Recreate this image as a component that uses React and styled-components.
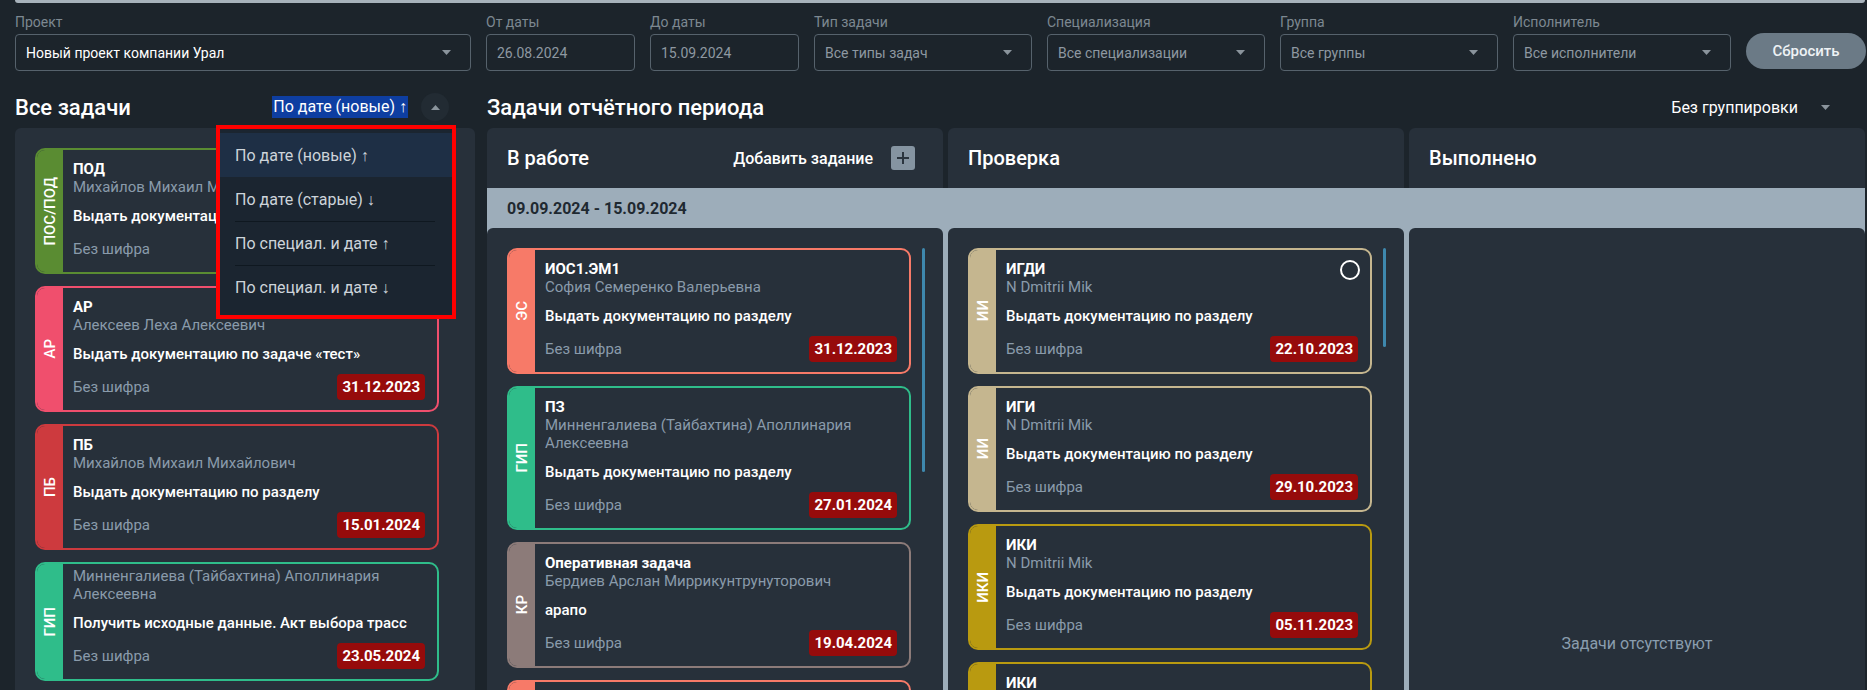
import React from "react";
import styled, { createGlobalStyle } from "styled-components";

const GlobalStyle = createGlobalStyle`
  html, body {
    margin: 0;
    padding: 0;
    background: #1c242b;
    overflow: hidden;
  }
  body {
    font-family: Roboto, "Noto Sans", Arial, sans-serif;
    color: #fff;
  }
  * {
    box-sizing: border-box;
  }
`;

const filters = [
  { label: "Проект", value: "Новый проект компании Урал", w: 456, arrow: true },
  { label: "От даты", value: "26.08.2024", w: 149, muted: true },
  { label: "До даты", value: "15.09.2024", w: 149, muted: true },
  { label: "Тип задачи", value: "Все типы задач", w: 218, muted: true, arrow: true },
  { label: "Специализация", value: "Все специализации", w: 218, muted: true, arrow: true },
  { label: "Группа", value: "Все группы", w: 218, muted: true, arrow: true },
  { label: "Исполнитель", value: "Все исполнители", w: 218, muted: true, arrow: true },
];

const sortOptions = [
  "По дате (новые) ↑",
  "По дате (старые) ↓",
  "По специал. и дате ↑",
  "По специал. и дате ↓",
];

const DOC = "Выдать документацию по разделу";
const GIP_NAME = "Минненгалиева (Тайбахтина) Аполлинария Алексеевна";

const allTasks = [
  { spec: "ПОС/ПОД", color: "#5a8c32", title: "ПОД", name: "Михайлов Михаил Михайлович", task: DOC, date: "10.12.2023" },
  { spec: "АР", color: "#f04f6d", title: "АР", name: "Алексеев Леха Алексеевич", task: "Выдать документацию по задаче «тест»", date: "31.12.2023" },
  { spec: "ПБ", color: "#cd3a3e", title: "ПБ", name: "Михайлов Михаил Михайлович", task: DOC, date: "15.01.2024" },
  { spec: "ГИП", color: "#2fbd8a", title: "", name: GIP_NAME, task: "Получить исходные данные. Акт выбора трасс", date: "23.05.2024" },
];

const columns = [
  {
    title: "В работе",
    add: true,
    thumb: 224,
    tasks: [
      { spec: "ЭС", color: "#f77a68", title: "ИОС1.ЭМ1", name: "София Семеренко Валерьевна", task: DOC, date: "31.12.2023" },
      { spec: "ГИП", color: "#2fbd8a", title: "ПЗ", name: GIP_NAME, task: DOC, date: "27.01.2024" },
      { spec: "КР", color: "#8c7b79", title: "Оперативная задача", name: "Бердиев Арслан Миррикунтрунуторович", task: "арапо", date: "19.04.2024" },
      { spec: "ЭС", color: "#f77a68", title: "ИОС1.ЭМ2", name: "София Семеренко Валерьевна", task: DOC, date: "20.05.2024" },
    ],
  },
  {
    title: "Проверка",
    thumb: 99,
    tasks: [
      { spec: "ИИ", color: "#c5b68f", title: "ИГДИ", name: "N Dmitrii Mik", task: DOC, date: "22.10.2023", marker: true },
      { spec: "ИИ", color: "#c5b68f", title: "ИГИ", name: "N Dmitrii Mik", task: DOC, date: "29.10.2023" },
      { spec: "ИКИ", color: "#b99a10", title: "ИКИ", name: "N Dmitrii Mik", task: DOC, date: "05.11.2023" },
      { spec: "ИКИ", color: "#b99a10", title: "ИКИ", name: "N Dmitrii Mik", task: DOC, date: "12.11.2023" },
    ],
  },
  { title: "Выполнено", tasks: [] },
];

const Caret = ({ up, color = "#8a949c" }) => (
  <svg width="9" height="5" viewBox="0 0 9 5">
    <path d={up ? "M0 5 L4.5 0 L9 5 Z" : "M0 0 L9 0 L4.5 5 Z"} fill={color} />
  </svg>
);

const TaskCard = ({ t }) => (
  <Card $color={t.color}>
    <Stripe $color={t.color}>
      <span>{t.spec}</span>
    </Stripe>
    <CardBody $noTitle={!t.title}>
      {t.title && <CardTitle>{t.title}</CardTitle>}
      <CardName>{t.name}</CardName>
      <CardTask>{t.task}</CardTask>
      <CardFooter>
        <Cipher>Без шифра</Cipher>
        <DateBadge>{t.date}</DateBadge>
      </CardFooter>
    </CardBody>
    {t.marker && <Marker />}
  </Card>
);

const App = () => {
  return (
    <Page>
      <GlobalStyle />
      <TopStrip />
      <Filters>
        {filters.map((f) => (
          <Field key={f.label} $w={f.w}>
            <FieldLabel>{f.label}</FieldLabel>
            <SelectBox $muted={f.muted}>
              <span>{f.value}</span>
              {f.arrow && <Caret />}
            </SelectBox>
          </Field>
        ))}
        <ResetButton>Сбросить</ResetButton>
      </Filters>

      <Workspace>
        <LeftSection>
          <Heading>
            <HeadingTitle>Все задачи</HeadingTitle>
            <HeadingTools>
              <SortText>По дате (новые) ↑</SortText>
              <RoundCaret>
                <Caret up />
              </RoundCaret>
            </HeadingTools>
          </Heading>
          <SortMenu>
            {sortOptions.map((o, i) => (
              <SortItem key={o} $active={i === 0} $divider={i > 1}>
                {o}
              </SortItem>
            ))}
          </SortMenu>
          <LeftPanel>
            {allTasks.map((t) => (
              <TaskCard key={t.spec + t.date} t={t} />
            ))}
          </LeftPanel>
        </LeftSection>

        <RightSection>
          <Heading>
            <HeadingTitle>Задачи отчётного периода</HeadingTitle>
            <HeadingTools>
              <GroupingText>Без группировки</GroupingText>
              <RoundCaret $plain>
                <Caret />
              </RoundCaret>
            </HeadingTools>
          </Heading>
          <Board>
            <ColumnHeaders>
              {columns.map((c) => (
                <ColumnHeader key={c.title}>
                  <ColumnTitle>{c.title}</ColumnTitle>
                  {c.add && (
                    <AddTask>
                      Добавить задание
                      <AddButton>
                        <svg width="14" height="14" viewBox="0 0 14 14">
                          <path d="M7 1 V13 M1 7 H13" stroke="#2a343e" strokeWidth="2" />
                        </svg>
                      </AddButton>
                    </AddTask>
                  )}
                </ColumnHeader>
              ))}
            </ColumnHeaders>
            <Period>
              <PeriodLabel>09.09.2024 - 15.09.2024</PeriodLabel>
              <PeriodColumns>
                {columns.map((c) =>
                  c.tasks.length ? (
                    <ColumnBody key={c.title}>
                      <CardList>
                        {c.tasks.map((t) => (
                          <TaskCard key={t.title + t.date} t={t} />
                        ))}
                      </CardList>
                      <ScrollThumb style={{ height: c.thumb }} />
                    </ColumnBody>
                  ) : (
                    <ColumnBody key={c.title} $empty>
                      <EmptyNote>Задачи отсутствуют</EmptyNote>
                    </ColumnBody>
                  )
                )}
              </PeriodColumns>
            </Period>
          </Board>
        </RightSection>
      </Workspace>
    </Page>
  );
};

export default App;

const Page = styled.div`
  padding: 0 2px 0 15px;
  min-height: 100vh;
`;

const TopStrip = styled.div`
  height: 3px;
  background: #a7b2bb;
  border-radius: 0 0 6px 6px;
`;

const Filters = styled.div`
  display: flex;
  align-items: flex-end;
  gap: 15px;
  margin-top: 11px;
`;

const Field = styled.div`
  flex: none;
  width: ${(p) => p.$w}px;
  display: flex;
  flex-direction: column;
  gap: 4px;
`;

const FieldLabel = styled.label`
  font-size: 14px;
  line-height: 16px;
  color: #7d8891;
`;

const SelectBox = styled.div`
  height: 37px;
  border: 1px solid #56626c;
  border-radius: 4px;
  display: flex;
  align-items: center;
  justify-content: space-between;
  padding: 0 19px 0 10px;
  font-size: 14px;
  color: ${(p) => (p.$muted ? "#8e98a1" : "#ffffff")};
  white-space: nowrap;
`;

const ResetButton = styled.button`
  flex: none;
  width: 120px;
  height: 36px;
  margin-bottom: 2px;
  border: none;
  border-radius: 18px;
  background: #6b7a86;
  color: #eef2f5;
  font-family: inherit;
  font-size: 15px;
  font-weight: 500;
`;

const Workspace = styled.div`
  display: flex;
  gap: 12px;
  margin-top: 21px;
`;

const LeftSection = styled.section`
  position: relative;
  flex: none;
  width: 460px;
`;

const RightSection = styled.section`
  flex: none;
  width: 1378px;
`;

const Heading = styled.div`
  height: 30px;
  margin-bottom: 6px;
  display: flex;
  align-items: center;
  justify-content: space-between;
`;

const HeadingTitle = styled.h2`
  margin: 0;
  font-size: 22px;
  font-weight: 500;
  color: #fff;
`;

const HeadingTools = styled.div`
  display: flex;
  align-items: center;
  gap: 13px;
  padding-right: 26px;
`;

const SortText = styled.span`
  background: #0e3ea1;
  color: #fff;
  font-size: 16px;
  line-height: 22px;
  padding: 0 1px;
`;

const GroupingText = styled.span`
  color: #fff;
  font-size: 16px;
`;

const RoundCaret = styled.span`
  width: 28px;
  height: 28px;
  border-radius: 50%;
  background: ${(p) => (p.$plain ? "transparent" : "#222b33")};
  display: flex;
  align-items: center;
  justify-content: center;
`;

const SortMenu = styled.ul`
  position: absolute;
  z-index: 5;
  left: 201px;
  top: 33px;
  width: 240px;
  margin: 0;
  padding: 4px 0 6px;
  list-style: none;
  background: #1b2530;
  border: 4px solid #ff0000;
`;

const SortItem = styled.li`
  height: 44px;
  display: flex;
  align-items: center;
  font-size: 16px;
  color: #cdd4da;
  background: ${(p) => (p.$active ? "#1e2f45" : "transparent")};
  border-top: ${(p) => (p.$divider ? "1px solid #0f1820" : "none")};
  margin: ${(p) => (p.$divider ? "0 17px 0 15px" : "0")};
  padding-left: ${(p) => (p.$divider ? "0" : "15px")};
`;

const LeftPanel = styled.div`
  height: 700px;
  background: #27303a;
  border-radius: 6px;
  padding: 20px 36px 0 20px;
  display: flex;
  flex-direction: column;
  gap: 12px;
`;

const Board = styled.div`
  display: flex;
  flex-direction: column;
`;

const ColumnHeaders = styled.div`
  display: grid;
  grid-template-columns: repeat(3, 1fr);
  gap: 5px;
`;

const ColumnHeader = styled.div`
  height: 60px;
  background: #27303a;
  border-radius: 6px 6px 0 0;
  display: flex;
  align-items: center;
  justify-content: space-between;
  padding: 0 28px 0 20px;
`;

const ColumnTitle = styled.h3`
  margin: 0;
  font-size: 20px;
  font-weight: 500;
  color: #fff;
`;

const AddTask = styled.div`
  display: flex;
  align-items: center;
  gap: 18px;
  font-size: 16px;
  font-weight: 500;
  color: #fff;
`;

const AddButton = styled.span`
  width: 24px;
  height: 24px;
  border-radius: 3px;
  background: #8594a1;
  display: flex;
  align-items: center;
  justify-content: center;
`;

const Period = styled.div`
  background: #9dadba;
`;

const PeriodLabel = styled.div`
  height: 40px;
  display: flex;
  align-items: center;
  padding-left: 20px;
  font-size: 16px;
  font-weight: 700;
  color: #1f2931;
`;

const PeriodColumns = styled.div`
  display: grid;
  grid-template-columns: repeat(3, 1fr);
  gap: 5px;
`;

const ColumnBody = styled.div`
  height: 830px;
  background: #27303a;
  border-radius: 6px 6px 0 0;
  display: flex;
  gap: 11px;
  padding: ${(p) => (p.$empty ? "0" : "20px 0 0 20px")};
  align-items: ${(p) => (p.$empty ? "center" : "flex-start")};
  justify-content: ${(p) => (p.$empty ? "center" : "flex-start")};
`;

const CardList = styled.div`
  width: 404px;
  display: flex;
  flex-direction: column;
  gap: 12px;
`;

const ScrollThumb = styled.div`
  width: 3px;
  border-radius: 2px;
  background: #3e88ad;
`;

const EmptyNote = styled.div`
  font-size: 16px;
  color: #8a9dae;
`;

const Card = styled.div`
  position: relative;
  flex: none;
  display: flex;
  width: 404px;
  border: 2px solid ${(p) => p.$color};
  border-radius: 10px;
  overflow: hidden;
  background: #27303a;
`;

const Stripe = styled.div`
  flex: 0 0 26px;
  background: ${(p) => p.$color};
  display: flex;
  align-items: center;
  justify-content: center;

  span {
    writing-mode: vertical-rl;
    transform: rotate(180deg);
    font-size: 15px;
    font-weight: 500;
    color: #fff;
    white-space: nowrap;
  }
`;

const CardBody = styled.div`
  flex: 1;
  min-width: 0;
  padding: ${(p) => (p.$noTitle ? "3px" : "10px")} 12px 10px 10px;
  font-size: 15px;
  line-height: 18px;
`;

const CardTitle = styled.div`
  font-weight: 700;
  color: #fff;
`;

const CardName = styled.div`
  color: #8a9bab;
`;

const CardTask = styled.div`
  margin-top: 11px;
  font-weight: 500;
  color: #fff;
`;

const CardFooter = styled.div`
  margin-top: 11px;
  height: 26px;
  display: flex;
  align-items: center;
  justify-content: space-between;
`;

const Cipher = styled.span`
  color: #8a9bab;
`;

const DateBadge = styled.span`
  height: 26px;
  padding: 0 5px;
  border-radius: 4px;
  background: #960b0b;
  color: #fff;
  font-weight: 700;
  font-size: 15px;
  display: flex;
  align-items: center;
`;

const Marker = styled.span`
  position: absolute;
  top: 10px;
  right: 10px;
  width: 20px;
  height: 20px;
  border: 2px solid #fff;
  border-radius: 50%;
`;
